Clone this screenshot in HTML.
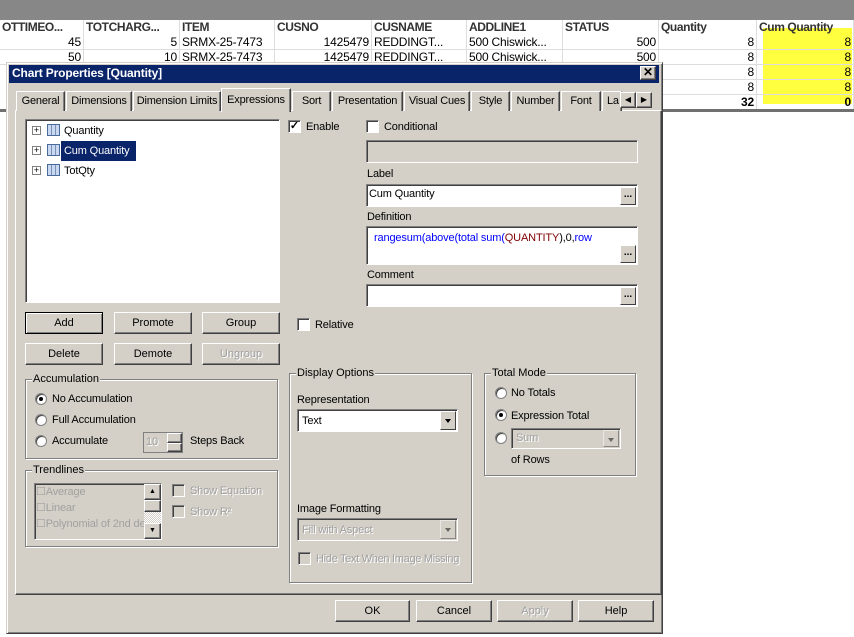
<!DOCTYPE html>
<html><head><style>
*{box-sizing:border-box;margin:0;padding:0}
body{width:854px;height:637px;position:relative;overflow:hidden;background:#fff;font-family:"Liberation Sans",sans-serif;font-size:11px;color:#000}
.a{position:absolute}
.t{position:absolute;white-space:nowrap;line-height:13px;letter-spacing:-0.15px}
.hd{position:absolute;top:20px;height:15px;font-weight:bold;font-size:12px;line-height:15px;color:#333;letter-spacing:-0.4px;white-space:nowrap;overflow:hidden;border-right:1px solid #ddd;padding-left:2px}
.c{position:absolute;height:15px;font-size:12px;line-height:15px;letter-spacing:-0.2px;white-space:nowrap;overflow:hidden;border-right:1px solid #ddd;border-bottom:1px solid #ddd}
.r{text-align:right;padding-right:2px}
.btn{position:absolute;height:22px;background:#d4d0c8;border:1px solid;border-color:#fff #404040 #404040 #fff;box-shadow:inset -1px -1px 0 #808080;text-align:center;line-height:20px;font-size:11px}
.dis{color:#a0a0a0;text-shadow:1px 1px 0 #fff}
.sunk{position:absolute;background:#fff;border:1px solid;border-color:#808080 #fff #fff #808080;box-shadow:inset 1px 1px 0 #404040}
.grp{position:absolute;border:1px solid #808080;box-shadow:1px 1px 0 #fff,inset 1px 1px 0 #fff}
.gl{position:absolute;top:-7px;left:6px;background:#d4d0c8;padding:0 1px;line-height:13px}
.cb{position:absolute;width:13px;height:13px;background:#fff;border:1px solid;border-color:#808080 #fff #fff #808080;box-shadow:inset 1px 1px 0 #404040}
.rd{position:absolute;width:12px;height:12px;border-radius:50%;background:#fff;border:1px solid #808080;box-shadow:inset 1px 1px 0 #404040}
.dot:after{content:"";position:absolute;left:3px;top:3px;width:4px;height:4px;border-radius:50%;background:#000}
.tab{position:absolute;top:91px;height:20px;border:1px solid;border-color:#fff #404040 transparent #fff;border-bottom:none;box-shadow:inset -1px 0 0 #808080;text-align:center;line-height:18px;background:#d4d0c8;letter-spacing:-0.2px}
.dd{position:absolute;right:1px;top:1px;bottom:1px;width:16px;background:#d4d0c8;border:1px solid;border-color:#fff #404040 #404040 #fff}
.dd:after{content:"";position:absolute;left:4px;top:7px;border:3px solid transparent;border-top:4px solid #000}
.dots{position:absolute;right:1px;bottom:1px;width:16px;height:18px;background:#d4d0c8;border:1px solid;border-color:#fff #404040 #404040 #fff;font-size:10px;line-height:14px;text-align:center;font-weight:bold}
.plus{position:absolute;width:9px;height:9px;border:1px solid #808080;background:#fff;font-size:9px;line-height:7px;text-align:center}
.ic{position:absolute;width:13px;height:12px;border:1px solid #4a6a9a;background:repeating-linear-gradient(90deg,#c8d8f0 0 3px,#7a90b8 3px 4px),#c8d8f0}
</style></head><body>
<div class="a" style="left:0;top:0;width:854px;height:20px;background:#878787"></div>
<div class="a" style="left:0;top:20px;width:854px;height:90px;background:#fff"></div>
<div class="a" style="left:763px;top:28px;width:89px;height:76px;background:#ffff40"></div>
<div class="hd" style="left:0;width:84px">OTTIMEO...</div>
<div class="hd" style="left:84px;width:96px">TOTCHARG...</div>
<div class="hd" style="left:180px;width:95px">ITEM</div>
<div class="hd" style="left:275px;width:97px">CUSNO</div>
<div class="hd" style="left:372px;width:95px">CUSNAME</div>
<div class="hd" style="left:467px;width:96px">ADDLINE1</div>
<div class="hd" style="left:563px;width:96px">STATUS</div>
<div class="hd" style="left:659px;width:98px">Quantity</div>
<div class="hd" style="left:757px;width:97px">Cum Quantity</div>
<div class="c r" style="left:0;top:35px;width:84px">45</div>
<div class="c r" style="left:84px;top:35px;width:96px">5</div>
<div class="c" style="left:180px;top:35px;width:95px;padding-left:2px">SRMX-25-7473</div>
<div class="c r" style="left:275px;top:35px;width:97px">1425479</div>
<div class="c" style="left:372px;top:35px;width:95px;padding-left:2px">REDDINGT...</div>
<div class="c" style="left:467px;top:35px;width:96px;padding-left:2px">500 Chiswick...</div>
<div class="c r" style="left:563px;top:35px;width:96px">500</div>
<div class="c r" style="left:659px;top:35px;width:98px">8</div>
<div class="c r" style="left:757px;top:35px;width:97px">8</div>
<div class="c r" style="left:0;top:50px;width:84px">50</div>
<div class="c r" style="left:84px;top:50px;width:96px">10</div>
<div class="c" style="left:180px;top:50px;width:95px;padding-left:2px">SRMX-25-7473</div>
<div class="c r" style="left:275px;top:50px;width:97px">1425479</div>
<div class="c" style="left:372px;top:50px;width:95px;padding-left:2px">REDDINGT...</div>
<div class="c" style="left:467px;top:50px;width:96px;padding-left:2px">500 Chiswick...</div>
<div class="c r" style="left:563px;top:50px;width:96px">500</div>
<div class="c r" style="left:659px;top:50px;width:98px">8</div>
<div class="c r" style="left:757px;top:50px;width:97px">8</div>
<div class="c r" style="left:659px;top:65px;width:98px">8</div>
<div class="c r" style="left:757px;top:65px;width:97px">8</div>
<div class="c r" style="left:659px;top:80px;width:98px">8</div>
<div class="c r" style="left:757px;top:80px;width:97px">8</div>
<div class="c r" style="left:659px;top:95px;width:98px;font-weight:bold">32</div>
<div class="c r" style="left:757px;top:95px;width:97px;font-weight:bold">0</div>
<div class="a" style="left:0;top:109px;width:854px;height:3px;background:#707070"></div>

<div class="a" style="left:6px;top:62px;width:657px;height:572px;background:#d4d0c8;border:1px solid;border-color:#d4d0c8 #404040 #404040 #d4d0c8;box-shadow:inset 1px 1px 0 #fff,inset -1px -1px 0 #808080"></div>
<div class="a" style="left:9px;top:65px;width:650px;height:18px;background:#0a246a"></div>
<div class="t" style="left:12px;top:67px;color:#fff;font-weight:bold;font-size:12px">Chart Properties [Quantity]</div>
<div class="btn" style="left:640px;top:66px;width:16px;height:14px;line-height:11px;font-weight:bold;font-size:12px">✕</div>

<div class="a" style="left:15px;top:110px;width:647px;height:485px;border:1px solid;border-color:#fff #404040 #404040 #fff;box-shadow:inset -1px -1px 0 #808080"></div>
<div class="tab" style="left:16px;width:49px">General</div>
<div class="tab" style="left:66px;width:66px">Dimensions</div>
<div class="tab" style="left:133px;width:88px">Dimension Limits</div>
<div class="tab" style="left:292px;width:39px">Sort</div>
<div class="tab" style="left:332px;width:71px">Presentation</div>
<div class="tab" style="left:404px;width:66px">Visual Cues</div>
<div class="tab" style="left:471px;width:39px">Style</div>
<div class="tab" style="left:511px;width:49px">Number</div>
<div class="tab" style="left:561px;width:40px">Font</div>
<div class="tab" style="left:602px;width:20px;text-align:left;padding-left:4px;overflow:hidden">La</div>
<div class="tab" style="left:221px;top:88px;height:24px;width:70px;line-height:22px;border-bottom:none">Expressions</div>
<div class="btn" style="left:620px;top:92px;width:16px;height:16px;line-height:13px;font-size:8px">◀</div>
<div class="btn" style="left:636px;top:92px;width:16px;height:16px;line-height:13px;font-size:8px">▶</div>

<div class="sunk" style="left:25px;top:119px;width:255px;height:184px"></div>
<div class="plus" style="left:32px;top:126px">+</div><div class="ic" style="left:47px;top:124px"></div><div class="t" style="left:64px;top:125px">Quantity</div>
<div class="plus" style="left:32px;top:146px">+</div><div class="ic" style="left:47px;top:144px"></div>
<div class="a" style="left:61px;top:141px;width:75px;height:20px;background:#0a246a"></div><div class="t" style="left:64px;top:145px;color:#fff">Cum Quantity</div>
<div class="plus" style="left:32px;top:166px">+</div><div class="ic" style="left:47px;top:164px"></div><div class="t" style="left:64px;top:165px">TotQty</div>

<div class="btn" style="left:25px;top:312px;width:78px;border:1px solid #000;box-shadow:inset 1px 1px 0 #fff,inset -1px -1px 0 #808080">Add</div>
<div class="btn" style="left:114px;top:312px;width:78px">Promote</div>
<div class="btn" style="left:202px;top:312px;width:78px">Group</div>
<div class="btn" style="left:25px;top:343px;width:78px">Delete</div>
<div class="btn" style="left:114px;top:343px;width:78px">Demote</div>
<div class="btn dis" style="left:202px;top:343px;width:78px">Ungroup</div>

<div class="cb" style="left:288px;top:120px;font-size:11px;line-height:10px;text-align:center;font-weight:bold">✓</div><div class="t" style="left:306px;top:121px">Enable</div>
<div class="cb" style="left:366px;top:120px"></div><div class="t" style="left:384px;top:121px">Conditional</div>
<div class="a" style="left:366px;top:140px;width:272px;height:23px;border:1px solid;border-color:#808080 #fff #fff #808080;box-shadow:inset 1px 1px 0 #404040"></div>
<div class="t" style="left:367px;top:168px">Label</div>
<div class="sunk" style="left:366px;top:184px;width:272px;height:23px"><div class="dots">...</div></div>
<div class="t" style="left:369px;top:188px">Cum Quantity</div>
<div class="t" style="left:367px;top:211px">Definition</div>
<div class="sunk" style="left:366px;top:226px;width:272px;height:39px"><div class="dots">...</div></div>
<div class="t" style="left:374px;top:232px;color:#0000ff">rangesum(above(total sum(<span style="color:#800000">QUANTITY</span><span style="color:#000">),0,</span>row</div>
<div class="t" style="left:367px;top:269px">Comment</div>
<div class="sunk" style="left:366px;top:284px;width:272px;height:23px"><div class="dots">...</div></div>
<div class="cb" style="left:297px;top:318px"></div><div class="t" style="left:315px;top:319px">Relative</div>

<div class="grp" style="left:25px;top:379px;width:253px;height:80px"><span class="gl">Accumulation</span></div>
<div class="rd dot" style="left:35px;top:393px"></div><div class="t" style="left:52px;top:393px">No Accumulation</div>
<div class="rd" style="left:35px;top:414px"></div><div class="t" style="left:52px;top:414px">Full Accumulation</div>
<div class="rd" style="left:35px;top:435px"></div><div class="t" style="left:52px;top:435px">Accumulate</div>
<div class="a" style="left:143px;top:432px;width:40px;height:21px;border:1px solid #808080;background:#d4d0c8"></div>
<div class="t dis" style="left:146px;top:436px">10</div>
<div class="btn" style="left:167px;top:433px;width:15px;height:10px"></div><div class="btn" style="left:167px;top:443px;width:15px;height:9px"></div>
<div class="t" style="left:190px;top:435px">Steps Back</div>

<div class="grp" style="left:25px;top:470px;width:253px;height:77px"><span class="gl">Trendlines</span></div>
<div class="a" style="left:34px;top:483px;width:128px;height:57px;border:1px solid;border-color:#808080 #fff #fff #808080;box-shadow:inset 1px 1px 0 #404040;overflow:hidden">
<div class="t dis" style="left:1px;top:2px;text-shadow:none">☐Average</div>
<div class="t dis" style="left:1px;top:18px;text-shadow:none">☐Linear</div>
<div class="t dis" style="left:1px;top:34px;text-shadow:none">☐Polynomial of 2nd de</div>
</div>
<div class="a" style="left:144px;top:484px;width:17px;height:55px;background:repeating-conic-gradient(#d4d0c8 0 25%,#fff 0 50%) 0 0/2px 2px"></div>
<div class="btn" style="left:144px;top:484px;width:17px;height:16px;font-size:7px;line-height:13px">▲</div>
<div class="btn" style="left:144px;top:500px;width:17px;height:12px"></div>
<div class="btn" style="left:144px;top:523px;width:17px;height:16px;font-size:7px;line-height:13px">▼</div>
<div class="cb" style="left:172px;top:484px;background:#d4d0c8"></div><div class="t dis" style="left:190px;top:485px">Show Equation</div>
<div class="cb" style="left:172px;top:505px;background:#d4d0c8"></div><div class="t dis" style="left:190px;top:506px">Show R²</div>

<div class="grp" style="left:289px;top:373px;width:183px;height:210px"><span class="gl">Display Options</span></div>
<div class="t" style="left:297px;top:394px">Representation</div>
<div class="sunk" style="left:297px;top:409px;width:161px;height:23px"><div class="dd"></div></div>
<div class="t" style="left:302px;top:415px">Text</div>
<div class="t" style="left:297px;top:503px">Image Formatting</div>
<div class="a" style="left:297px;top:518px;width:161px;height:23px;border:1px solid;border-color:#808080 #fff #fff #808080;box-shadow:inset 1px 1px 0 #404040"><div class="dd" style="opacity:.5"></div></div>
<div class="t dis" style="left:302px;top:524px">Fill with Aspect</div>
<div class="cb" style="left:298px;top:552px;background:#d4d0c8"></div><div class="t dis" style="left:316px;top:553px;letter-spacing:-0.3px">Hide Text When Image Missing</div>

<div class="grp" style="left:484px;top:373px;width:152px;height:103px"><span class="gl">Total Mode</span></div>
<div class="rd" style="left:495px;top:387px"></div><div class="t" style="left:511px;top:387px">No Totals</div>
<div class="rd dot" style="left:495px;top:409px"></div><div class="t" style="left:511px;top:410px">Expression Total</div>
<div class="rd" style="left:495px;top:432px"></div>
<div class="a" style="left:511px;top:428px;width:110px;height:21px;border:1px solid;border-color:#808080 #fff #fff #808080;box-shadow:inset 1px 1px 0 #404040"><div class="dd" style="opacity:.5"></div></div>
<div class="t dis" style="left:516px;top:432px">Sum</div>
<div class="t" style="left:511px;top:454px">of Rows</div>

<div class="btn" style="left:335px;top:600px;width:75px">OK</div>
<div class="btn" style="left:416px;top:600px;width:76px">Cancel</div>
<div class="btn dis" style="left:497px;top:600px;width:76px">Apply</div>
<div class="btn" style="left:578px;top:600px;width:76px">Help</div>
</body></html>
